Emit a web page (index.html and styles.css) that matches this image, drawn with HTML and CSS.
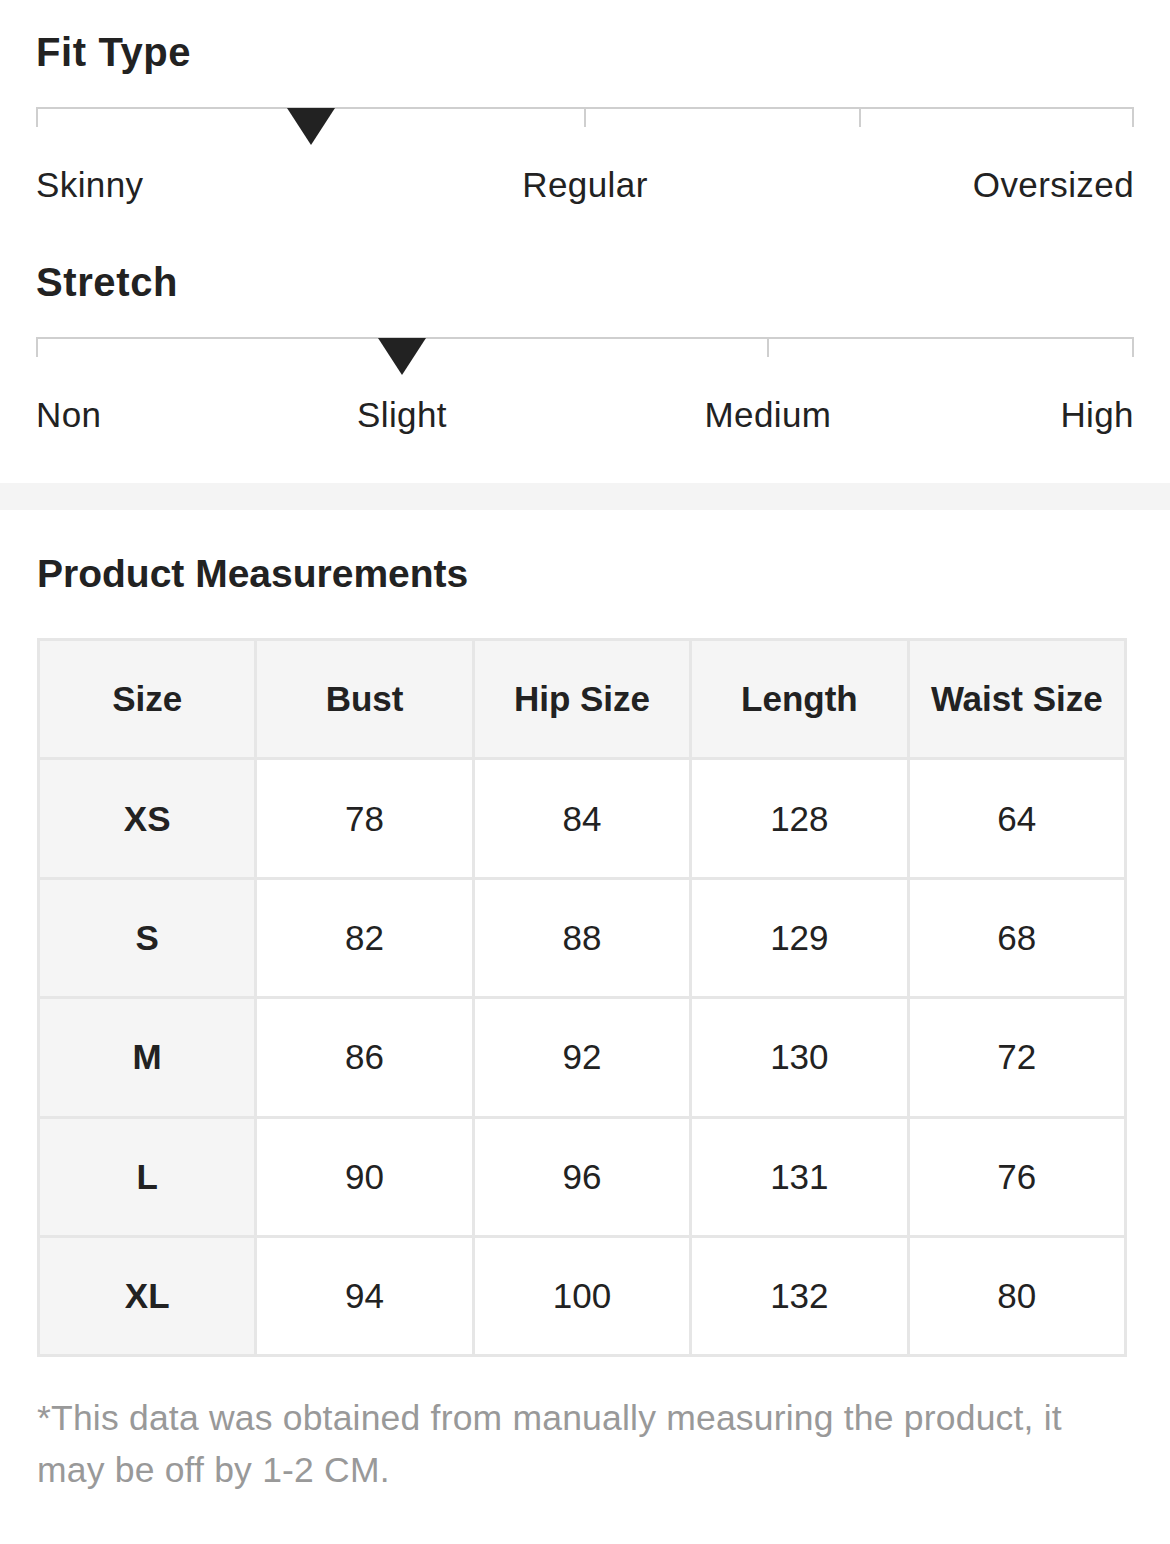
FILE: index.html
```html
<!DOCTYPE html>
<html>
<head>
<meta charset="utf-8">
<link rel="stylesheet" href="styles.css">
</head>
<body>
<section class="fit">
  <div class="scale-block">
    <h2 class="scale-title">Fit Type</h2>
    <div class="track">
      <span class="tick tick-start"></span>
      <span class="tick tick-half"></span>
      <span class="tick tick-three-q"></span>
      <span class="tick tick-end"></span>
      <span class="marker marker-quarter"></span>
    </div>
    <div class="labels labels-fit">
      <span class="lbl lbl-first">Skinny</span>
      <span class="lbl lbl-mid-wide">Regular</span>
      <span class="lbl lbl-last">Oversized</span>
    </div>
  </div>
  <div class="scale-block scale-block-second">
    <h2 class="scale-title">Stretch</h2>
    <div class="track">
      <span class="tick tick-start"></span>
      <span class="tick tick-two-third"></span>
      <span class="tick tick-end"></span>
      <span class="marker marker-third"></span>
    </div>
    <div class="labels labels-stretch">
      <span class="lbl lbl-first">Non</span>
      <span class="lbl lbl-mid-a">Slight</span>
      <span class="lbl lbl-mid-b">Medium</span>
      <span class="lbl lbl-last">High</span>
    </div>
  </div>
</section>
<div class="divider"></div>
<section class="measure">
  <h2 class="measure-title">Product Measurements</h2>
  <table class="size-table">
    <thead>
      <tr><th>Size</th><th>Bust</th><th>Hip Size</th><th>Length</th><th>Waist Size</th></tr>
    </thead>
    <tbody>
      <tr><th>XS</th><td>78</td><td>84</td><td>128</td><td>64</td></tr>
      <tr><th>S</th><td>82</td><td>88</td><td>129</td><td>68</td></tr>
      <tr><th>M</th><td>86</td><td>92</td><td>130</td><td>72</td></tr>
      <tr><th>L</th><td>90</td><td>96</td><td>131</td><td>76</td></tr>
      <tr><th>XL</th><td>94</td><td>100</td><td>132</td><td>80</td></tr>
    </tbody>
  </table>
  <p class="note">*This data was obtained from manually measuring the product, it may be off by 1-2 CM.</p>
</section>
</body>
</html>
```
FILE: styles.css
```css
* { box-sizing: border-box; }
html, body { margin: 0; padding: 0; background: #fff; }
body {
  font-family: "Liberation Sans", Arial, sans-serif;
  color: #222;
  width: 1170px;
}
.fit {
  padding: 29px 36px 48px 36px;
}
.scale-title {
  margin: 0;
  font-size: 40px;
  line-height: 46px;
  font-weight: bold;
  letter-spacing: 0.6px;
  color: #222;
}
.scale-block-second { margin-top: 54px; }
.track {
  position: relative;
  margin-top: 32px;
  height: 20px;
  border-top: 2px solid #cfcfcf;
}
.tick {
  position: absolute;
  top: -1px;
  width: 2px;
  height: 19px;
  background: #cfcfcf;
}
.tick-start { left: 0; }
.tick-half { left: calc(50% - 1px); }
.tick-three-q { left: calc(75% - 1px); }
.tick-two-third { left: calc(66.667% - 1px); }
.tick-end { right: 0; }
.marker {
  position: absolute;
  top: -1px;
  width: 0;
  height: 0;
  border-left: 24px solid transparent;
  border-right: 24px solid transparent;
  border-top: 37px solid #222;
  transform: translateX(-50%);
}
.marker-quarter { left: 25%; }
.marker-third { left: 33.333%; }
.labels {
  display: grid;
  margin-top: 38px;
  font-size: 35px;
  line-height: 40px;
  letter-spacing: 0.4px;
  color: #222;
}
.labels-fit { grid-template-columns: 1fr 1fr 1fr 1fr; }
.labels-fit .lbl-mid-wide { grid-column: 2 / span 2; text-align: center; }
.labels-stretch { grid-template-columns: repeat(6, 1fr); }
.labels-stretch .lbl-mid-a { grid-column: 2 / span 2; text-align: center; }
.labels-stretch .lbl-mid-b { grid-column: 4 / span 2; text-align: center; }
.lbl-first { text-align: left; white-space: nowrap; }
.lbl-last { text-align: right; white-space: nowrap; }
.divider {
  height: 27px;
  background: #f4f4f4;
}
.measure {
  padding: 41px 43px 40px 37px;
}
.measure-title {
  margin: 0;
  font-size: 39px;
  line-height: 46px;
  font-weight: bold;
  color: #222;
}
.size-table {
  margin-top: 41px;
  width: 1090px;
  border-collapse: collapse;
  table-layout: fixed;
  border: 3px solid #e6e6e6;
}
.size-table th,
.size-table td {
  border: 3px solid #e6e6e6;
  height: 119.4px;
  padding: 0;
  text-align: center;
  vertical-align: middle;
  font-size: 35px;
  color: #222;
}
.size-table th { font-weight: bold; background: #f5f5f5; }
.size-table td { font-weight: normal; background: #fff; }
.note {
  margin: 35px 0 0 0;
  width: 1070px;
  font-size: 35.5px;
  line-height: 52px;
  letter-spacing: 0.2px;
  color: #999;
}
```
